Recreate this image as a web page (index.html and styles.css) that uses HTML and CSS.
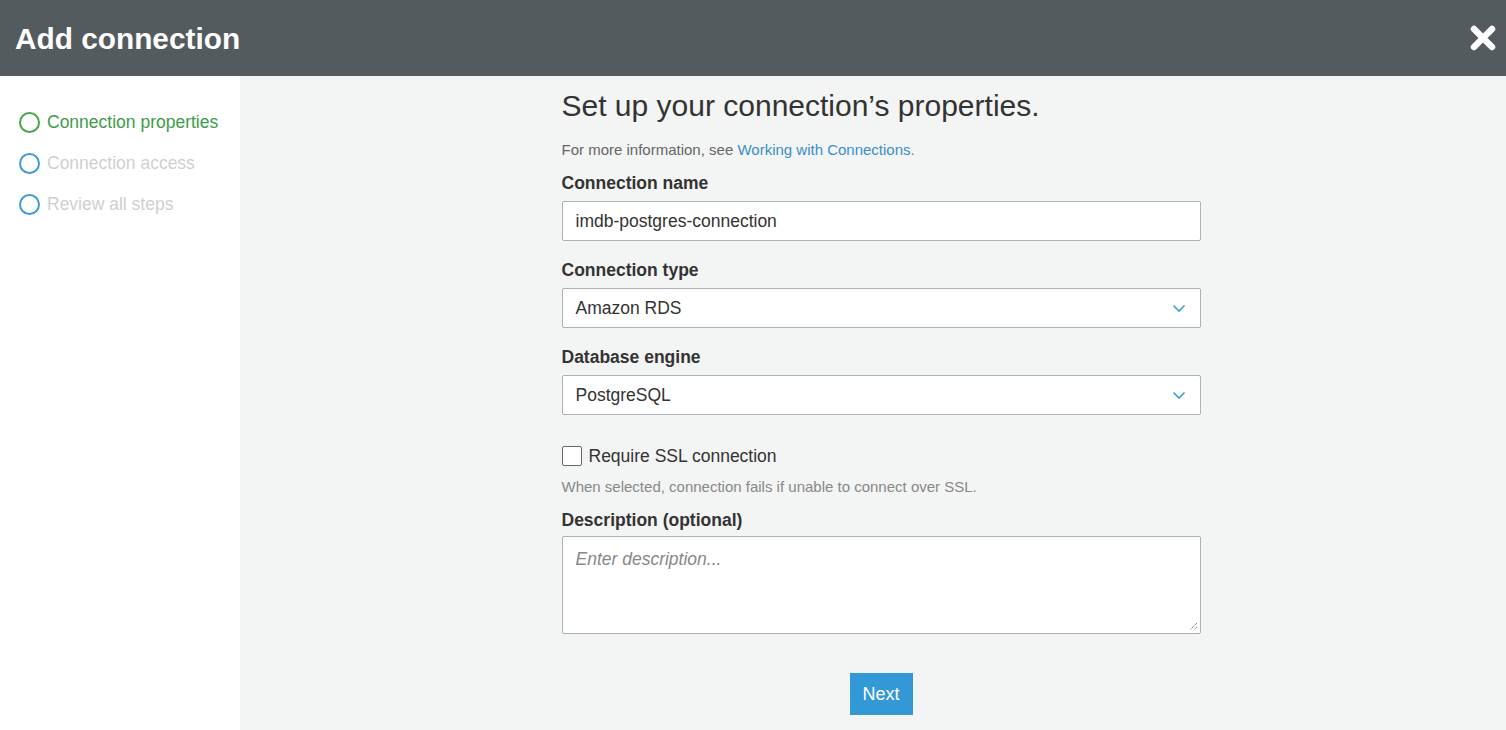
FILE: index.html
```html
<!DOCTYPE html>
<html>
<head>
<meta charset="utf-8">
<link rel="stylesheet" href="styles.css">
</head>
<body>
<div class="app">
  <header class="topbar">
    <h1 class="title">Add connection</h1>
    <span class="close">
      <svg width="26" height="26" viewBox="0 0 26 26"><path d="M4 4 L22 22 M22 4 L4 22" stroke="#fff" stroke-width="6.5" stroke-linecap="round"/></svg>
    </span>
  </header>
  <div class="body">
    <nav class="steps">
      <div class="step active"><span class="ring"></span>Connection properties</div>
      <div class="step"><span class="ring"></span>Connection access</div>
      <div class="step"><span class="ring"></span>Review all steps</div>
    </nav>
    <main class="main">
      <div class="form">
        <h2 class="heading">Set up your connection’s properties.</h2>
        <p class="info">For more information, see <a class="link">Working with Connections.</a></p>
        <div class="field first">
          <label class="label">Connection name</label>
          <div class="input">imdb-postgres-connection</div>
        </div>
        <div class="field">
          <label class="label">Connection type</label>
          <div class="input select">Amazon RDS
            <svg class="chev" width="14" height="9" viewBox="0 0 14 9"><path d="M1.5 1.5 L7 7 L12.5 1.5" fill="none" stroke="#3c9fd4" stroke-width="1.6"/></svg>
          </div>
        </div>
        <div class="field">
          <label class="label">Database engine</label>
          <div class="input select">PostgreSQL
            <svg class="chev" width="14" height="9" viewBox="0 0 14 9"><path d="M1.5 1.5 L7 7 L12.5 1.5" fill="none" stroke="#3c9fd4" stroke-width="1.6"/></svg>
          </div>
        </div>
        <div class="check-row"><span class="checkbox"></span>Require SSL connection</div>
        <p class="help">When selected, connection fails if unable to connect over SSL.</p>
        <div class="field desc">
          <label class="label">Description (optional)</label>
          <div class="textarea">Enter description...
            <svg class="grip" width="10" height="10" viewBox="0 0 10 10"><path d="M9 2 L2 9 M9 6 L6 9" stroke="#555" stroke-width="1" stroke-dasharray="1 1"/></svg>
          </div>
        </div>
        <div class="actions"><button class="next">Next</button></div>
      </div>
    </main>
  </div>
</div>
</body>
</html>
```
FILE: styles.css
```css
* { box-sizing: border-box; }
html, body { margin: 0; padding: 0; height: 100%; }
body { font-family: "Liberation Sans", Arial, sans-serif; color: #333; overflow: hidden; }
.app { display: flex; flex-direction: column; height: 730px; }
.topbar {
  height: 76px; background: #545b5f; display: flex; align-items: center;
  justify-content: space-between; padding: 2px 10px 0 15px; flex-shrink: 0;
}
.title { margin: 0; color: #fff; font-size: 29.8px; font-weight: bold; }
.close { display: flex; width: 26px; height: 26px; margin-top: -2px; }
.body { display: flex; flex: 1; min-height: 0; }
.steps { width: 240px; background: #fff; padding-top: 26px; flex-shrink: 0; }
.step { display: flex; align-items: center; height: 41px; padding-left: 19px; font-size: 17.5px; color: #cfcfcf; }
.step .ring { width: 21px; height: 21px; border: 2px solid #3e9bd5; border-radius: 50%; margin-right: 7px; }
.step.active { color: #3e9b48; }
.step.active .ring { border-color: #4aa54a; }
.main { flex: 1; background: #f3f4f4; display: flex; justify-content: center; padding-left: 16px; }
.form { width: 639px; padding-top: 13px; }
.heading { margin: 0; font-size: 30px; font-weight: normal; color: #333; line-height: 34px; }
.info { margin: 18px 0 0; font-size: 15px; color: #666; line-height: 18px; }
.link { color: #3a8fc8; }
.field { margin-top: 18px; }
.field.first { margin-top: 13px; }
.label { display: block; font-size: 17.5px; font-weight: bold; color: #333; line-height: 22px; margin-bottom: 7px; }
.input {
  height: 40px; background: #fff; border: 1px solid #aab2b7; border-radius: 2px;
  display: flex; align-items: center; padding: 0 13px; font-size: 17.5px; color: #333;
}
.select { justify-content: space-between; }
.chev { margin-right: 1px; }
.check-row { display: flex; align-items: center; font-size: 17.5px; color: #333; margin-top: 30px; height: 22px; }
.checkbox { width: 20px; height: 20px; border: 1px solid #666; border-radius: 2px; background: #fff; margin-right: 7px; }
.help { margin: 11px 0 0; font-size: 15px; color: #888; line-height: 18px; }
.field.desc { margin-top: 13px; }
.field.desc .label { margin-bottom: 5px; }
.textarea {
  height: 98px; background: #fff; border: 1px solid #aab2b7; border-radius: 2px;
  padding: 12px 13px; font-size: 17.5px; font-style: italic; color: #888; position: relative;
}
.grip { position: absolute; right: 2px; bottom: 2px; }
.actions { display: flex; justify-content: center; margin-top: 39px; }
.next {
  width: 63px; height: 42px; background: #3399d6; color: #fff; border: none;
  font-family: "Liberation Sans", Arial, sans-serif; font-size: 18px; padding: 0;
}
```
